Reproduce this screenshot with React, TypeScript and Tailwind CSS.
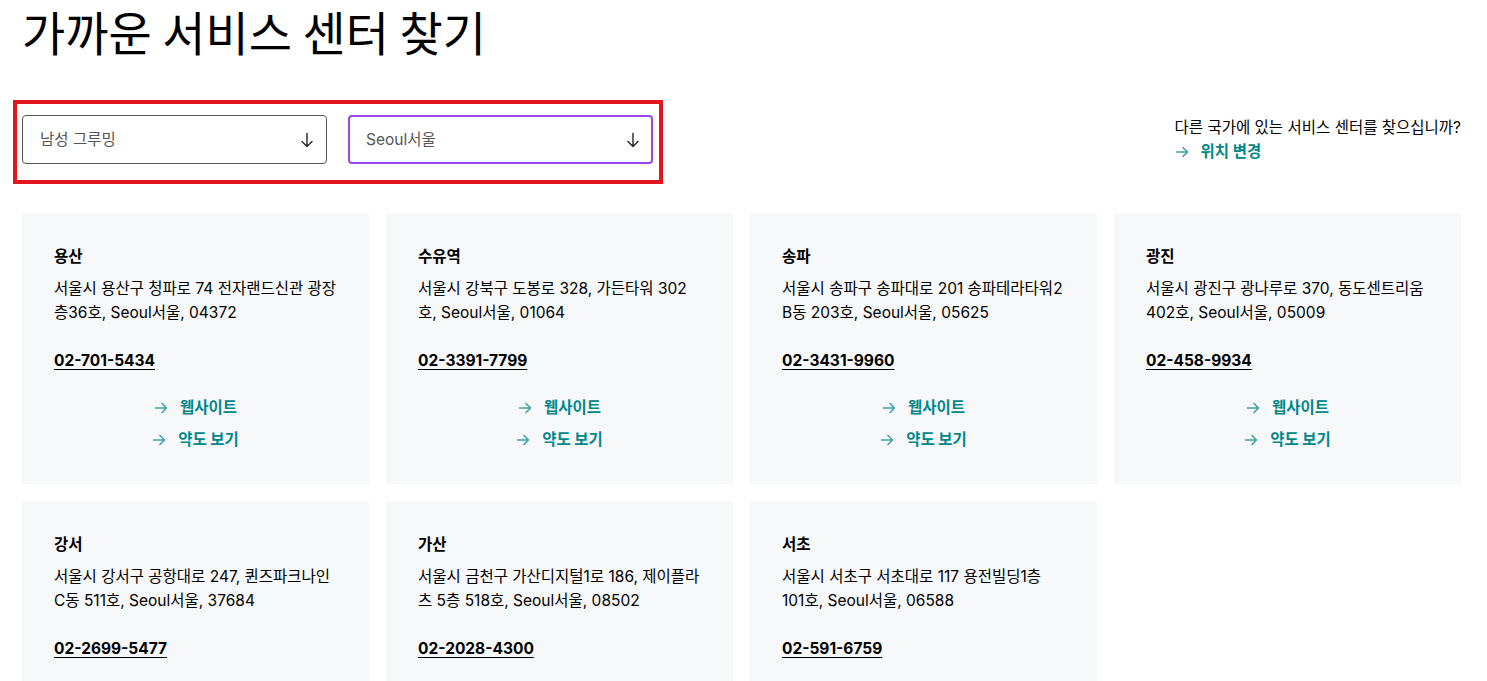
import React from "react";

const centers = [
  { name: "용산", addr: "서울시 용산구 청파로 74 전자랜드신관 광장층36호, Seoul서울, 04372", tel: "02-701-5434", links: true },
  { name: "수유역", addr: "서울시 강북구 도봉로 328, 가든타워 302호, Seoul서울, 01064", tel: "02-3391-7799", links: true },
  { name: "송파", addr: "서울시 송파구 송파대로 201 송파테라타워2 B동 203호, Seoul서울, 05625", tel: "02-3431-9960", links: true },
  { name: "광진", addr: "서울시 광진구 광나루로 370, 동도센트리움 402호, Seoul서울, 05009", tel: "02-458-9934", links: true },
  { name: "강서", addr: "서울시 강서구 공항대로 247, 퀸즈파크나인 C동 511호, Seoul서울, 37684", tel: "02-2699-5477", links: true },
  { name: "가산", addr: "서울시 금천구 가산디지털1로 186, 제이플라츠 5층 518호, Seoul서울, 08502", tel: "02-2028-4300", links: true },
  { name: "서초", addr: "서울시 서초구 서초대로 117 용전빌딩1층 101호, Seoul서울, 06588", tel: "02-591-6759", links: true },
];

function ArrowR() {
  return (
    <svg width="14" height="14" viewBox="0 0 14 14" fill="none" stroke="#3fa3a3" strokeWidth="1.6" strokeLinecap="round" strokeLinejoin="round">
      <path d="M1.5 7h11M8 2.5 12.5 7 8 11.5" />
    </svg>
  );
}

function ArrowD() {
  return (
    <svg width="14" height="16" viewBox="0 0 14 16" fill="none" stroke="#222" strokeWidth="1.4" strokeLinecap="round" strokeLinejoin="round">
      <path d="M7 1.5v13M2 9.5l5 5 5-5" />
    </svg>
  );
}

function LinkRow({ label }: { label: string }) {
  return (
    <div className="flex items-center justify-center gap-[12px] h-[24px]">
      <ArrowR />
      <span className="text-[15.5px] font-bold text-[#00878a]">{label}</span>
    </div>
  );
}

export default function App() {
  return (
    <div
      className="bg-white text-black w-[1487px] h-[681px] overflow-hidden pl-[22px]"
      style={{ fontFamily: 'Inter, "Noto Sans CJK KR", sans-serif' }}
    >
      <h1 className="text-[47px] leading-[58px] pt-[2px] font-normal" style={{ fontFamily: '"Noto Sans CJK KR", sans-serif' }}>
        가까운 서비스 센터 찾기
      </h1>
      <div className="flex justify-between items-start w-[1439px] mt-[40px]">
        <div className="ml-[-9px] border-[4px] border-[#e3161f] w-[650px] h-[84px] flex items-start gap-[21px] pl-[5px] pt-[11px]">
          <div className="w-[305px] h-[49px] border border-[#555] rounded-[4px] flex items-center justify-between pl-[17px] pr-[12px]">
            <span className="text-[15.5px] text-[#555]">남성 그루밍</span>
            <ArrowD />
          </div>
          <div className="w-[305px] h-[49px] border-2 border-[#9a46e8] rounded-[4px] flex items-center justify-between pl-[16px] pr-[11px]">
            <span className="text-[15.5px] text-[#555]">Seoul서울</span>
            <ArrowD />
          </div>
        </div>
        <div className="pt-[16px] text-[15.5px] leading-[24px]">
          <div>다른 국가에 있는 서비스 센터를 찾으십니까?</div>
          <div className="flex items-center gap-[12px]">
            <ArrowR />
            <span className="font-bold text-[#00878a]">위치 변경</span>
          </div>
        </div>
      </div>
      <div className="grid grid-cols-4 gap-[17px] w-[1439px] mt-[29px]">
        {centers.map((c) => (
          <div key={c.name} className="bg-[#f7f8fa] h-[271px] px-[32px] pt-[32px]">
            <div className="text-[15.5px] font-bold leading-[24px]">{c.name}</div>
            <div className="mt-[8px] text-[15.5px] leading-[24px]">{c.addr}</div>
            <div className="mt-[24px] text-[15.5px] leading-[24px] font-bold underline underline-offset-[3px]">{c.tel}</div>
            {c.links && (
              <div className="mt-[23px] flex flex-col gap-[8px]">
                <LinkRow label="웹사이트" />
                <LinkRow label="약도 보기" />
              </div>
            )}
          </div>
        ))}
      </div>
    </div>
  );
}
